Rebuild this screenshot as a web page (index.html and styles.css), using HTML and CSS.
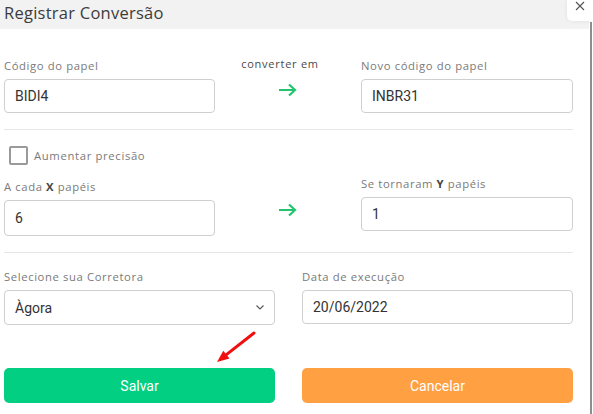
FILE: index.html
```html
<!DOCTYPE html>
<html lang="pt-BR">
<head>
<meta charset="utf-8">
<title>Registrar Conversão</title>
<link rel="stylesheet" href="styles.css">
</head>
<body>
<div class="modal">
  <header class="modal-header">
    <h1 class="title">Registrar Conversão</h1>
  </header>
  <div class="modal-body">
    <div class="row row-codes">
      <div class="field">
        <label class="label">Código do papel</label>
        <div class="input">BIDI4</div>
      </div>
      <div class="mid">
        <span class="mid-label">converter em</span>
        <svg class="arrow" width="19" height="14" viewBox="0 0 19 14"><path d="M1 7H17M11 1.5L17 7L11 12.5" fill="none" stroke="#22c56e" stroke-width="2.2"/></svg>
      </div>
      <div class="field">
        <label class="label">Novo código do papel</label>
        <div class="input">INBR31</div>
      </div>
    </div>
    <hr class="sep">
    <div class="check-row">
      <span class="checkbox"></span>
      <span class="check-label">Aumentar precisão</span>
    </div>
    <div class="row row-ratio">
      <div class="field">
        <label class="label">A cada <b>X</b> papéis</label>
        <div class="input tall">6</div>
      </div>
      <div class="mid mid-2">
        <svg class="arrow" width="19" height="14" viewBox="0 0 19 14"><path d="M1 7H17M11 1.5L17 7L11 12.5" fill="none" stroke="#22c56e" stroke-width="2.2"/></svg>
      </div>
      <div class="field field-up">
        <label class="label">Se tornaram <b>Y</b> papéis</label>
        <div class="input">1</div>
      </div>
    </div>
    <hr class="sep sep-2">
    <div class="row2">
      <div class="field">
        <label class="label">Selecione sua Corretora</label>
        <div class="input select">Àgora
          <svg class="chev" width="8" height="5" viewBox="0 0 8 5"><path d="M0.5 0.5L4 4L7.5 0.5" fill="none" stroke="#555" stroke-width="1.1"/></svg>
        </div>
      </div>
      <div class="field">
        <label class="label">Data de execução</label>
        <div class="input">20/06/2022</div>
      </div>
    </div>
    <div class="row2 buttons">
      <button class="btn btn-save">Salvar</button>
      <button class="btn btn-cancel">Cancelar</button>
    </div>
  </div>
  <button class="close" aria-label="Fechar">
    <svg width="10" height="10" viewBox="0 0 10 10"><path d="M1 1L9 9M9 1L1 9" stroke="#555" stroke-width="1.1"/></svg>
  </button>
  <div class="edge"></div>
  <svg class="pointer" width="50" height="40" viewBox="0 0 50 40"><path d="M40 3L12.4 24.6" stroke="#f01010" stroke-width="3" stroke-linecap="round"/><path d="M3 32L9.3 20.7L15.5 28.5Z" fill="#f01010"/></svg>
</div>
</body>
</html>
```
FILE: styles.css
```css
* { box-sizing: border-box; }
html, body { margin: 0; padding: 0; background: #fff; }
body {
  width: 593px;
  height: 414px;
  overflow: hidden;
  font-family: "Open Sans", "Noto Sans", sans-serif;
}
.modal {
  position: relative;
  width: 593px;
  height: 414px;
}
.modal-header {
  height: 29px;
  width: 589px;
  background: #f2f2f2;
  padding: 2px 0 0 4px;
}
.title {
  margin: 0;
  font-weight: 400;
  font-size: 16.5px;
  line-height: 22px;
  color: #3c3c3c;
  letter-spacing: 0.25px;
}
.modal-body {
  padding: 30px 0 0 4px;
  width: 573px;
}
.row {
  display: grid;
  grid-template-columns: 211px 146px 212px;
}
.field { display: flex; flex-direction: column; }
.label {
  font-size: 11.3px;
  line-height: 14px;
  color: #7a7a7a;
  margin-bottom: 6px;
  letter-spacing: 0.6px;
  white-space: nowrap;
}
.label b { color: #444; font-weight: 700; }
.input {
  height: 34px;
  border: 1px solid #cfcfcf;
  border-radius: 4px;
  padding: 0 10px;
  display: flex;
  align-items: center;
  font-family: Roboto, "Liberation Sans", sans-serif;
  font-size: 14px;
  color: #333;
}
.input.tall { height: 36px; }
.mid {
  display: flex;
  flex-direction: column;
  align-items: center;
  padding-right: 2px;
}
.mid-label {
  font-size: 11px;
  line-height: 14px;
  color: #4a4a4a;
  margin: -2px 0 0 -14px;
  letter-spacing: 0.75px;
  white-space: nowrap;
}
.arrow { margin-top: 12px; }
.mid-2 .arrow { margin-top: 23px; }
.sep {
  margin: 16px 0 0 0;
  border: 0;
  border-top: 1px solid #e6e6e6;
  height: 0;
}
.sep-2 { margin-top: 16px; }
.check-row {
  display: flex;
  align-items: center;
  margin: 16px 0 0 5px;
  height: 19px;
}
.checkbox {
  width: 19px;
  height: 19px;
  border: 2px solid #9a9a9a;
  border-radius: 2px;
}
.check-label {
  margin-left: 6px;
  font-size: 11.3px;
  color: #7a7a7a;
  letter-spacing: 0.65px;
}
.row-ratio { margin-top: 15px; }
.field-up { margin-top: -3px; }
.row2 {
  display: grid;
  grid-template-columns: 271px 271px;
  column-gap: 27px;
}
.sep-2 + .row2 { margin-top: 17px; }
.select { justify-content: space-between; height: 35px; }
.chev { margin-right: 0px; }
.buttons { margin-top: 43px; }
.btn {
  height: 35px;
  border: 0;
  border-radius: 5px;
  font-family: Roboto, "Liberation Sans", sans-serif;
  font-size: 14px;
  color: #fff;
  padding: 0;
}
.btn-save { background: #02cf81; }
.btn-cancel { background: #ffa042; }
.close {
  position: absolute;
  top: 0;
  right: 0;
  width: 26px;
  height: 21px;
  background: #fff;
  border: 0;
  border-bottom-left-radius: 5px;
  box-shadow: 0 0 4px rgba(0,0,0,0.08);
  padding: 0;
  display: flex;
  align-items: flex-start;
  justify-content: center;
  padding-top: 1px;
}
.edge {
  position: absolute;
  top: 22px;
  left: 590px;
  width: 2px;
  height: 392px;
  background: #8e8e8e;
}
.pointer {
  position: absolute;
  left: 214px;
  top: 330px;
}
```
